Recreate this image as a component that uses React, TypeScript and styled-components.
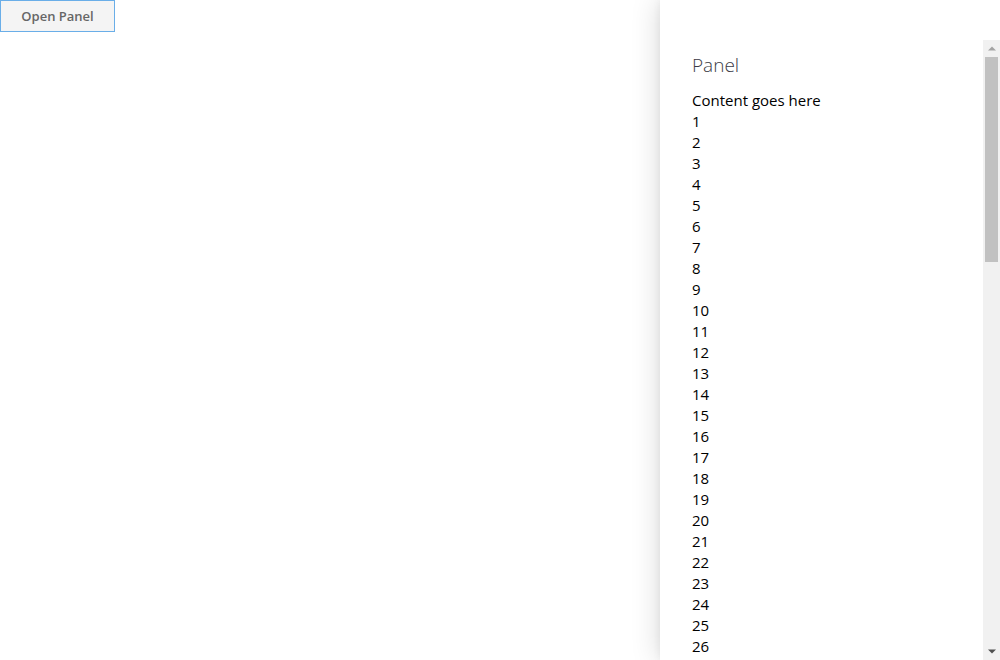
import React from "react";
import styled, { createGlobalStyle } from "styled-components";

const GlobalStyle = createGlobalStyle`
  html, body {
    margin: 0;
    padding: 0;
    background: #ffffff;
    font-family: "Open Sans", "Noto Sans", sans-serif;
  }
  #root { height: 660px; }
`;

const Page = styled.div`
  position: relative;
  width: 1000px;
  height: 660px;
  overflow: hidden;
`;

const OpenButton = styled.button`
  display: flex;
  align-items: center;
  justify-content: center;
  box-sizing: border-box;
  width: 115px;
  height: 32px;
  margin: 0;
  padding: 0 16px;
  background: #f4f4f4;
  border: 1px solid #6aaee8;
  border-radius: 0;
  font-family: "Open Sans", "Noto Sans", sans-serif;
  font-size: 13px;
  font-weight: 600;
  color: #666666;
  cursor: pointer;
`;

const PanelShell = styled.aside`
  position: absolute;
  top: 0;
  right: 0;
  bottom: 0;
  width: 340px;
  display: flex;
  flex-direction: column;
  background: #ffffff;
  box-shadow: 0 0 28px rgba(0, 0, 0, 0.16), 0 0 8px rgba(0, 0, 0, 0.06);
`;

const Nav = styled.div`
  flex: 0 0 40px;
`;

const Body = styled.div`
  flex: 1;
  min-height: 0;
  display: flex;
`;

const Scroller = styled.div`
  flex: 1;
  min-width: 0;
  overflow: hidden;
`;

const Header = styled.div`
  padding: 11px 24px 0 32px;
`;

const Title = styled.h2`
  margin: 0;
  font-family: "Open Sans", "Noto Sans", sans-serif;
  font-size: 19px;
  font-weight: 300;
  line-height: 28px;
  color: #3b3a45;
`;

const Content = styled.div`
  padding: 11px 24px 20px 32px;
  font-family: "Open Sans", "Noto Sans", sans-serif;
  font-size: 15px;
  line-height: 21px;
  color: #000000;
`;

const Line = styled.div`
  height: 21px;
`;

const ScrollBar = styled.div`
  flex: 0 0 17px;
  display: flex;
  flex-direction: column;
  background: #f1f1f1;
`;

const ScrollButton = styled.div`
  flex: 0 0 17px;
  display: flex;
  align-items: center;
  justify-content: center;
`;

const Track = styled.div`
  flex: 1;
  display: flex;
  flex-direction: column;
`;

const Thumb = styled.div<{ $size: number }>`
  flex: 0 0 ${(p) => p.$size}px;
  margin: 0 2px;
  background: #c1c1c1;
`;

const Arrow = ({ up, color }: { up?: boolean; color: string }) => (
  <svg width="8" height="5" viewBox="0 0 8 5">
    {up ? (
      <polygon points="0,4.5 4,0.5 8,4.5" fill={color} />
    ) : (
      <polygon points="0,0.5 8,0.5 4,4.5" fill={color} />
    )}
  </svg>
);

export default function App() {
  const items = Array.from({ length: 80 }, (_, i) => i + 1);
  return (
    <Page>
      <GlobalStyle />
      <OpenButton>Open Panel</OpenButton>
      <PanelShell>
        <Nav />
        <Body>
          <Scroller>
            <Header>
              <Title>Panel</Title>
            </Header>
            <Content>
              <Line>Content goes here</Line>
              {items.map((n) => (
                <Line key={n}>{n}</Line>
              ))}
            </Content>
          </Scroller>
          <ScrollBar>
            <ScrollButton>
              <Arrow up color="#a3a3a3" />
            </ScrollButton>
            <Track>
              <Thumb $size={205} />
            </Track>
            <ScrollButton>
              <Arrow color="#505050" />
            </ScrollButton>
          </ScrollBar>
        </Body>
      </PanelShell>
    </Page>
  );
}
